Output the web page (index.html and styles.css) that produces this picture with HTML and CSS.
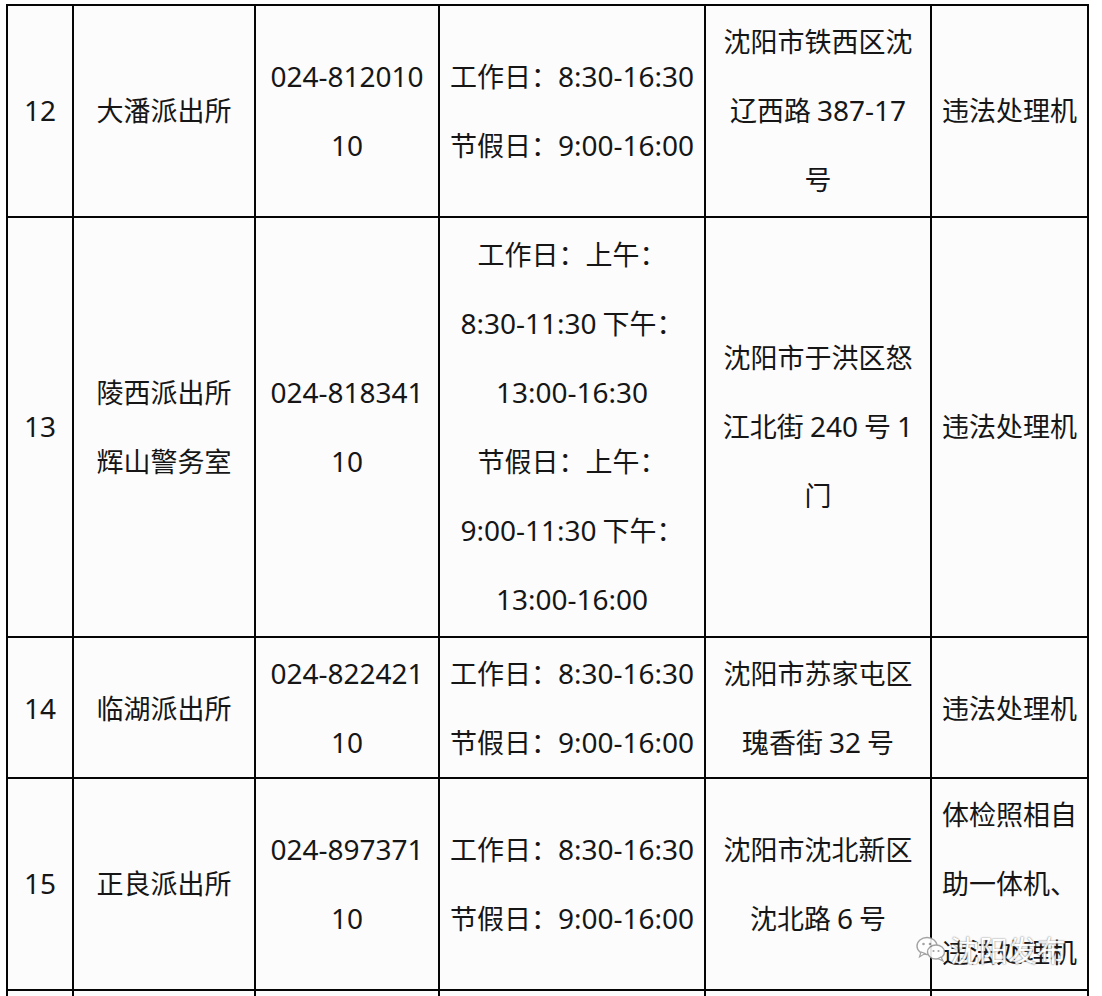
FILE: index.html
```html
<!DOCTYPE html>
<html lang="zh-CN">
<head>
<meta charset="utf-8">
<title>派出所业务办理</title>
<link rel="stylesheet" href="styles.css">
</head>
<body>
<div class="page">
<table class="grid">
  <colgroup>
    <col class="c-no"><col class="c-name"><col class="c-tel"><col class="c-time"><col class="c-addr"><col class="c-dev">
  </colgroup>
  <tbody>
    <tr class="r-a">
      <td><span class="n">12</span></td>
      <td>大潘派出所</td>
      <td><span class="n">024-812010</span><br><span class="n">10</span></td>
      <td>工作日：<span class="n">8:30-16:30</span><br>节假日：<span class="n">9:00-16:00</span></td>
      <td>沈阳市铁西区沈<br>辽西路 <span class="n">387-17</span><br>号</td>
      <td>违法处理机</td>
    </tr>
    <tr class="r-b">
      <td><span class="n">13</span></td>
      <td>陵西派出所<br>辉山警务室</td>
      <td><span class="n">024-818341</span><br><span class="n">10</span></td>
      <td>工作日：上午：<br><span class="n">8:30-11:30</span> 下午：<br><span class="n">13:00-16:30</span><br>节假日：上午：<br><span class="n">9:00-11:30</span> 下午：<br><span class="n">13:00-16:00</span></td>
      <td>沈阳市于洪区怒<br>江北街 <span class="n">240</span> 号 <span class="n">1</span><br>门</td>
      <td>违法处理机</td>
    </tr>
    <tr class="r-c">
      <td><span class="n">14</span></td>
      <td>临湖派出所</td>
      <td><span class="n">024-822421</span><br><span class="n">10</span></td>
      <td>工作日：<span class="n">8:30-16:30</span><br>节假日：<span class="n">9:00-16:00</span></td>
      <td>沈阳市苏家屯区<br>瑰香街 <span class="n">32</span> 号</td>
      <td>违法处理机</td>
    </tr>
    <tr class="r-a">
      <td><span class="n">15</span></td>
      <td>正良派出所</td>
      <td><span class="n">024-897371</span><br><span class="n">10</span></td>
      <td>工作日：<span class="n">8:30-16:30</span><br>节假日：<span class="n">9:00-16:00</span></td>
      <td>沈阳市沈北新区<br>沈北路 <span class="n">6</span> 号</td>
      <td>体检照相自<br>助一体机、<br>违法处理机</td>
    </tr>
    <tr class="r-next">
      <td></td><td></td><td></td><td></td><td></td><td></td>
    </tr>
  </tbody>
</table>
<div class="watermark">
  <svg class="wm-icon" viewBox="0 0 30 26" width="30" height="26" aria-hidden="true">
    <ellipse cx="11" cy="10" rx="10" ry="8.5" fill="#ffffff" stroke="#9a9a9a" stroke-width="1.4"/>
    <path d="M5 16 L3.5 21 L9 17.5 Z" fill="#ffffff" stroke="#9a9a9a" stroke-width="1.2"/>
    <ellipse cx="20" cy="16" rx="8.5" ry="7" fill="#ffffff" stroke="#9a9a9a" stroke-width="1.4"/>
    <path d="M25 21 L27 25 L22 22.5 Z" fill="#ffffff" stroke="#9a9a9a" stroke-width="1.2"/>
    <circle cx="7.5" cy="8" r="1.3" fill="#9a9a9a"/>
    <circle cx="14" cy="8" r="1.3" fill="#9a9a9a"/>
    <circle cx="17.5" cy="15" r="1.1" fill="#9a9a9a"/>
    <circle cx="22.5" cy="15" r="1.1" fill="#9a9a9a"/>
  </svg>
  <span class="wm-text">沈阳发布</span>
</div>
</div>
</body>
</html>
```
FILE: styles.css
```css
html, body {
  margin: 0;
  padding: 0;
  background: #ffffff;
}
.page {
  position: relative;
  width: 1102px;
  height: 996px;
  overflow: hidden;
  padding: 4px 0 0 6px;
  box-sizing: border-box;
}
.grid {
  border-collapse: collapse;
  table-layout: fixed;
  width: 1083px;
  background: #fcfcfd;
  font-family: "Noto Sans CJK SC", "Noto Sans", sans-serif;
  font-size: 27px;
  line-height: 69px;
  color: #161616;
}
.grid td {
  border: 2px solid #050505;
  text-align: center;
  vertical-align: middle;
  padding: 0 2px 3px;
  white-space: nowrap;
  overflow: hidden;
}
.grid .r-c td {
  padding-bottom: 1px;
}
.n {
  font-family: "Noto Sans", "Noto Sans CJK SC", sans-serif;
  font-size: 28px;
  line-height: 1;
}
.c-no { width: 66px; }
.c-name { width: 182px; }
.c-tel { width: 184px; }
.c-time { width: 266px; }
.c-addr { width: 226px; }
.c-dev { width: 157px; }
.r-a { height: 212px; }
.r-b { height: 420px; }
.r-c { height: 141px; }
.r-next { height: 60px; }
.watermark {
  position: absolute;
  left: 916px;
  top: 934px;
  display: flex;
  align-items: center;
  gap: 4px;
  opacity: 0.9;
}
.wm-icon {
  display: block;
}
.wm-text {
  font-family: "Noto Sans CJK SC", sans-serif;
  font-size: 29px;
  line-height: 30px;
  color: #ffffff;
  text-shadow: 0 0 1px #8a8a8a, 0 0 2px #8a8a8a;
}
```
